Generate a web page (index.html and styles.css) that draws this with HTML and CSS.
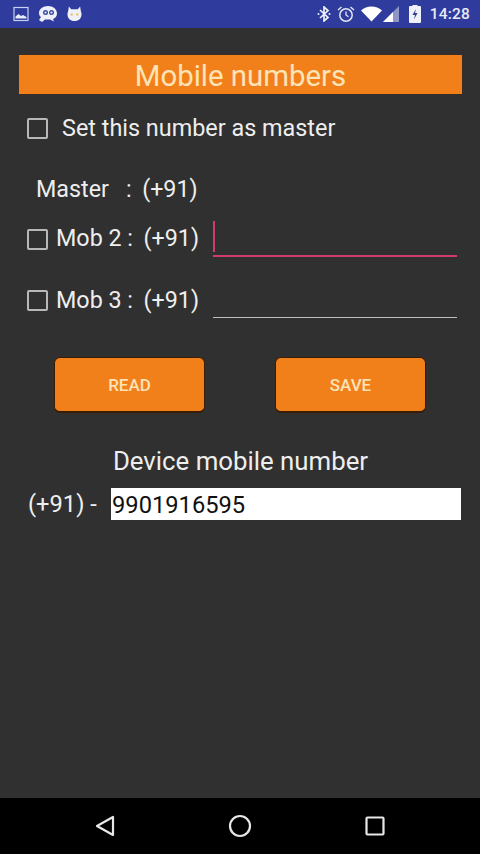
FILE: index.html
```html
<!DOCTYPE html>
<html lang="en">
<head>
<meta charset="utf-8">
<title>Mobile numbers</title>
<link rel="stylesheet" href="styles.css">
</head>
<body>
<div class="screen">
  <header class="status">
    <div class="status-left">
      <svg class="ic" width="16" height="16" viewBox="0 0 16 16"><rect x="1" y="1.500" width="14" height="13" fill="none" stroke="#c9d0f0" stroke-width="1.200"/><path d="M2.500 12.500v-2l3-2.500 2.500 2 2-1 3.500 2v1.500z" fill="#e8ebf8"/></svg>
      <svg class="ic" width="20" height="18" viewBox="0 0 20 18"><path d="M10 1c5 0 9 3 9 7.500 0 3-2 5-4 5.500l1 2.500-4-2H7l-3 2.500-3-2 2-3C1.500 11 1 9.500 1 8 1 4 5 1 10 1z" fill="#eef0fa"/><circle cx="7.500" cy="7.500" r="2.500" fill="#3a4aa0"/><circle cx="13.500" cy="7.500" r="2.500" fill="#3a4aa0"/><circle cx="7.500" cy="7.500" r="1.100" fill="#eef0fa"/><circle cx="13.500" cy="7.500" r="1.100" fill="#eef0fa"/></svg>
      <svg class="ic" width="15" height="18" viewBox="0 0 16 18"><path d="M2 1l2.500 3h7L14 1l.8 5c.5 1 .7 2 .7 3 0 5-3 7.500-7.500 7.500S.5 14 .5 9c0-1 .2-2 .7-3z" fill="#eef0fa"/><circle cx="5" cy="9.500" r="1.300" fill="#e9c46a"/><circle cx="11" cy="9.500" r="1.300" fill="#e9c46a"/></svg>
    </div>
    <div class="status-right">
      <svg class="ic bt" width="14" height="16" viewBox="0 0 14 16"><path d="M3 4l8 7.500L7 15V1l4 3.500L3 12" fill="none" stroke="#eef0fa" stroke-width="1.700"/><circle cx="1.500" cy="8" r="1" fill="#eef0fa"/><circle cx="12.500" cy="8" r="1" fill="#eef0fa"/></svg>
      <svg class="ic clock" width="18" height="18" viewBox="0 0 18 18"><circle cx="9" cy="10" r="6.200" fill="none" stroke="#e2e5f6" stroke-width="1.500"/><path d="M9 6.500V10l2.500 1.800" fill="none" stroke="#e2e5f6" stroke-width="1.300"/><path d="M1 5l3.500-3M17 5l-3.500-3" stroke="#e2e5f6" stroke-width="1.500"/></svg>
      <svg class="ic wifi" width="21" height="16" viewBox="0 0 21 16"><path d="M0 4.500C3 2 6.500.500 10.500.500S18 2 21 4.500L10.500 15.500z" fill="#fff"/></svg>
      <svg class="ic signal" width="16" height="16" viewBox="0 0 16 16"><path d="M16 0v16H0z" fill="#8e96c8"/><path d="M10 6v10H0z" fill="#fff"/></svg>
      <svg class="ic batt" width="12" height="18" viewBox="0 0 12 18"><path d="M3.500 1V0h5v1H11a1 1 0 0 1 1 1v15a1 1 0 0 1-1 1H1a1 1 0 0 1-1-1V2a1 1 0 0 1 1-1z" fill="#eef0fa"/><path d="M7 4L3.500 10H6l-1 4.500L8.500 8H6z" fill="#2f3c9e"/></svg>
      <span class="time">14:28</span>
    </div>
  </header>

  <main class="content">
    <h1 class="title">Mobile numbers</h1>

    <div class="row row-master">
      <span class="box"></span>
      <span class="set-label">Set this number as master</span>
    </div>

    <div class="master-line">
      <span class="master-name">Master</span><span>:</span><span class="code">(+91)</span>
    </div>

    <div class="row mob">
      <span class="box"></span>
      <span class="mob-label">Mob 2 :<span class="code">(+91)</span></span>
      <span class="field active"><span class="caret"></span></span>
    </div>

    <div class="row mob mob3">
      <span class="box"></span>
      <span class="mob-label">Mob 3 :<span class="code">(+91)</span></span>
      <span class="field"></span>
    </div>

    <div class="buttons">
      <button class="btn">READ</button>
      <button class="btn">SAVE</button>
    </div>

    <h2 class="device-title">Device mobile number</h2>
    <div class="device-row">
      <span class="prefix">(+91) -</span>
      <span class="device-input">9901916595</span>
    </div>
  </main>

  <footer class="nav">
    <svg width="22" height="24" viewBox="0 0 22 24"><path d="M19 3v18L3 12z" fill="none" stroke="#e8e8e8" stroke-width="2.200" stroke-linejoin="round"/></svg>
    <svg width="24" height="24" viewBox="0 0 24 24"><circle cx="12" cy="12" r="10" fill="none" stroke="#e8e8e8" stroke-width="2.200"/></svg>
    <svg width="22" height="22" viewBox="0 0 22 22"><rect x="2.500" y="2.500" width="17" height="17" rx="1" fill="none" stroke="#e8e8e8" stroke-width="2.200"/></svg>
  </footer>
</div>
</body>
</html>
```

FILE: styles.css
```css
* { box-sizing: border-box; }
html, body { margin: 0; padding: 0; }
body { font-family: Roboto, "Liberation Sans", sans-serif; background: #303030; }
.screen { width: 480px; height: 854px; display: flex; flex-direction: column; background: #303030; overflow: hidden; }

.status { height: 28px; flex: none; background: #2f3c9e; display: flex; justify-content: space-between; align-items: center; padding: 0 10px 0 13px; }
.status-left, .status-right { display: flex; align-items: center; }
.status-left { gap: 9px; }
.ic { display: block; flex: none; }
.bt { margin-right: 6px; }
.clock { margin-right: 6px; }
.wifi { margin-right: 1px; }
.signal { margin-right: 10px; }
.batt { margin-right: 9px; }
.time { font-size: 15.5px; font-weight: 500; color: #e8eaf6; letter-spacing: .2px; }

.content { flex: 1; padding: 27px 18px 0 19px; color: #eeeeee; }
.title { margin: 0; height: 39px; background: #f2801a; color: #fde3b8; font-size: 29.4px; font-weight: 400; line-height: 42px; text-align: center; box-shadow: 0 0 1px #5a2a00; }

.row { display: flex; align-items: center; }
.box { width: 21px; height: 21px; flex: none; border: 2.400px solid #b8b8b8; border-radius: 2px; margin-left: 8px; }
.row-master { margin-top: 23px; height: 22px; }
.set-label { margin-left: 14px; font-size: 23.4px; line-height: 22px; }

.master-line { margin-top: 37px; margin-left: 17px; height: 26px; display: flex; font-size: 23.3px; line-height: 26px; }
.master-name { width: 90px; }
.code { margin-left: 10.500px; }

.mob { height: 38px; margin-top: 17px; }
.mob .box { margin-top: 2px; }
.mob3 { height: 37px; margin-top: 24px; }
.mob-label { margin-left: 8px; width: 157px; font-size: 23.3px; line-height: 26px; white-space: nowrap; flex: none; }
.field { display: block; width: 244px; height: 100%; border-bottom: 1px solid #bdbdbd; position: relative; }
.field.active { border-bottom: 2px solid #d03c6c; }
.caret { position: absolute; left: 0; top: 2px; width: 2px; height: 31px; background: #d03c6c; }

.buttons { display: flex; justify-content: space-between; margin: 39px 36px 0 35px; }
.btn { width: 151px; height: 56px; background: #f2801a; border: 1.500px solid #3a1c04; border-bottom-width: 2px; border-radius: 6px; color: #fde3b8; font-family: Roboto, "Liberation Sans", sans-serif; font-size: 17px; font-weight: 500; padding: 0; }

.device-title { margin: 33px 0 0; font-size: 25.8px; font-weight: 400; line-height: 30px; text-align: center; color: #eeeeee; }
.device-row { display: flex; align-items: center; margin-top: 12px; padding-right: 1px; }
.prefix { margin-left: 9px; width: 83px; flex: none; font-size: 23.7px; }
.device-input { flex: 1; height: 32px; background: #fff; color: #111; font-size: 23.7px; line-height: 34px; padding-left: 1px; }

.nav { height: 56px; flex: none; background: #000; display: flex; align-items: center; justify-content: space-between; padding: 0 94px 0 94px; }
```
